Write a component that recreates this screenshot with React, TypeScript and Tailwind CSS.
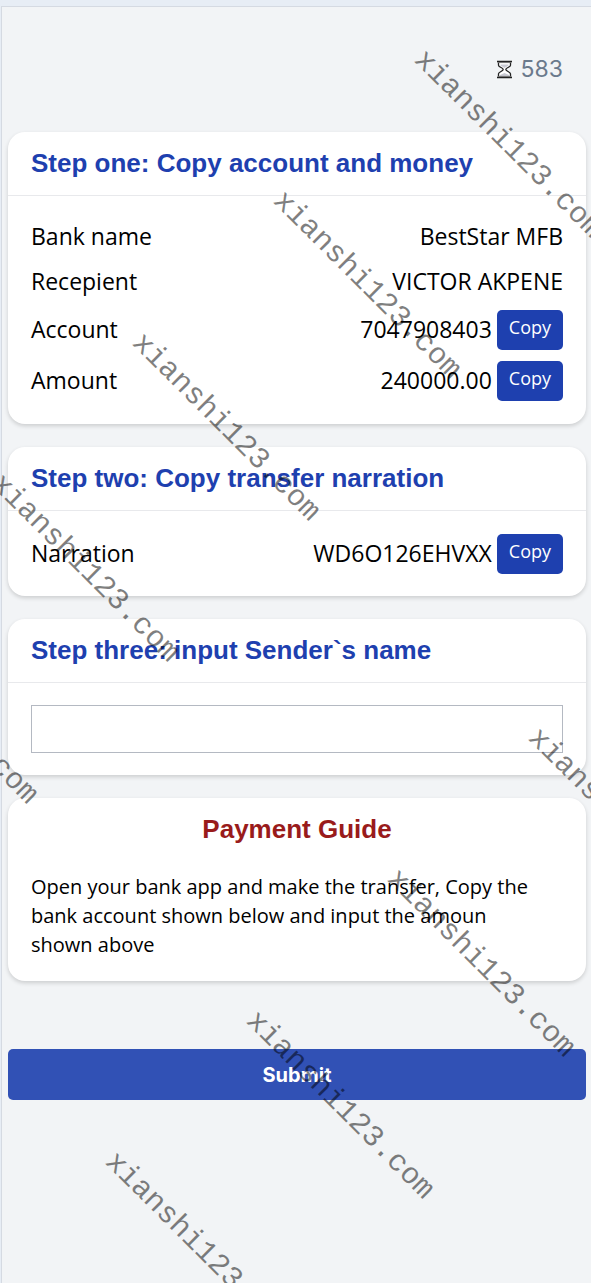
import { FC, ReactNode, useState } from "react";

interface ICardProps {
  title: string;
  children: ReactNode;
}

interface IInfoRowProps {
  label: string;
  value: string;
  copyable?: boolean;
}

const WATERMARKS = [
  "left-[419px] top-[37px]",
  "left-[278px] top-[178px]",
  "left-[137px] top-[320px]",
  "left-[-4px] top-[461px]",
  "left-[-145px] top-[603px]",
  "left-[533px] top-[715px]",
  "left-[392px] top-[856px]",
  "left-[251px] top-[998px]",
  "left-[110px] top-[1139px]",
];

const Hourglass: FC = () => (
  <svg width="17" height="19" viewBox="0 0 17 19" fill="none" aria-hidden="true">
    <path
      d="M2.5 2v3.2c0 1.800 4.700 2.800 4.700 4.300s-4.700 2.500-4.700 4.300V17h12v-3.200c0-1.800-4.700-2.800-4.700-4.300s4.700-2.500 4.700-4.300V2z"
      fill="#fff"
      stroke="#222"
      strokeWidth="1.3"
    />
    <path d="M4.500 4.500h8v1L8.500 8l-4-2.500zM4 16v-1l4.500-2 4.500 2v1z" fill="#c9cad3" />
    <path d="M1 1.500h15M1 17.500h15" stroke="#222" strokeWidth="1.4" />
    <path d="M1.500 2.600h14M1.500 16.400h14" stroke="#888" strokeWidth="0.8" />
  </svg>
);

const Card: FC<ICardProps> = ({ title, children }) => (
  <section className="rounded-[17px] bg-white shadow-[0_2px_4px_rgba(0,0,0,0.16)]">
    <h2 className="border-b border-[#e8e9ec] px-[23px] pt-[13px] pb-[14px] font-['Liberation_Sans',Arial,sans-serif] text-[26px] leading-9 font-bold text-[#1e40af]">
      {title}
    </h2>
    {children}
  </section>
);

const InfoRow: FC<IInfoRowProps> = ({ label, value, copyable }) => (
  <div className={`flex items-center justify-between text-[23px] ${copyable ? "h-[51px]" : "h-[45px]"}`}>
    <dt>{label}</dt>
    <dd className="flex items-center gap-[5px]">
      {value}
      {copyable && (
        <button
          type="button"
          aria-label={`Copy ${label}`}
          onClick={() => navigator.clipboard?.writeText(value)}
          className="h-10 rounded-[5px] bg-[#1e40af] px-3 pb-[5px] text-lg leading-8 text-white"
        >
          Copy
        </button>
      )}
    </dd>
  </div>
);

const Watermark: FC = () => (
  <div className="pointer-events-none absolute inset-0 overflow-hidden" aria-hidden="true">
    {WATERMARKS.map((place) => (
      <span
        key={place}
        className={`absolute origin-left rotate-45 whitespace-nowrap font-['Liberation_Mono',monospace] text-[30px] leading-9 text-black/50 ${place}`}
      >
        xianshi123.com
      </span>
    ))}
  </div>
);

export default function App() {
  const [sender, setSender] = useState("");

  return (
    <div className="relative flex min-h-screen flex-col bg-[#e7edf5] pt-1.5 pl-px font-['Open_Sans','Noto_Sans',sans-serif] text-black">
      <main className="grow border-t border-l border-[#d5dae2] bg-[#f2f4f6] pr-[5px] pl-1.5">
        <div className="flex items-center justify-end gap-2 pt-11 pr-[23px] pb-[45px] font-['Inter',sans-serif] text-[23px] leading-9 text-[#6b7a8c]">
          <Hourglass />
          <span>583</span>
        </div>

        <div className="flex flex-col gap-[23px]">
          <Card title="Step one: Copy account and money">
            <dl className="px-[23px] py-[18px]">
              <InfoRow label="Bank name" value="BestStar MFB" />
              <InfoRow label="Recepient" value="VICTOR AKPENE" />
              <InfoRow label="Account" value="7047908403" copyable />
              <InfoRow label="Amount" value="240000.00" copyable />
            </dl>
          </Card>

          <Card title="Step two: Copy transfer narration">
            <dl className="px-[23px] py-[17px]">
              <InfoRow label="Narration" value="WD6O126EHVXX" copyable />
            </dl>
          </Card>

          <Card title="Step three: input Sender`s name">
            <div className="px-[23px] py-[22px]">
              <input
                type="text"
                aria-label="Sender's name"
                value={sender}
                onChange={(e) => setSender(e.target.value)}
                className="block h-12 w-full border border-[#b4b9c2] px-3 text-xl outline-none"
              />
            </div>
          </Card>

          <section className="rounded-[17px] bg-white px-[23px] pt-[13px] pb-[22px] shadow-[0_2px_4px_rgba(0,0,0,0.16)]">
            <h2 className="text-center font-['Liberation_Sans',Arial,sans-serif] text-[26px] leading-9 font-bold text-[#991b1b]">
              Payment Guide
            </h2>
            <p className="pt-[25px] pr-6 text-xl leading-[29px]">
              Open your bank app and make the transfer, Copy the bank account shown below and input the amoun shown above
            </p>
          </section>
        </div>

        <button
          type="submit"
          className="mt-[68px] block h-[51px] w-full rounded-[5px] bg-[#3151b5] font-['Inter',sans-serif] text-xl font-bold text-white"
        >
          Submit
        </button>
      </main>
      <Watermark />
    </div>
  );
}
